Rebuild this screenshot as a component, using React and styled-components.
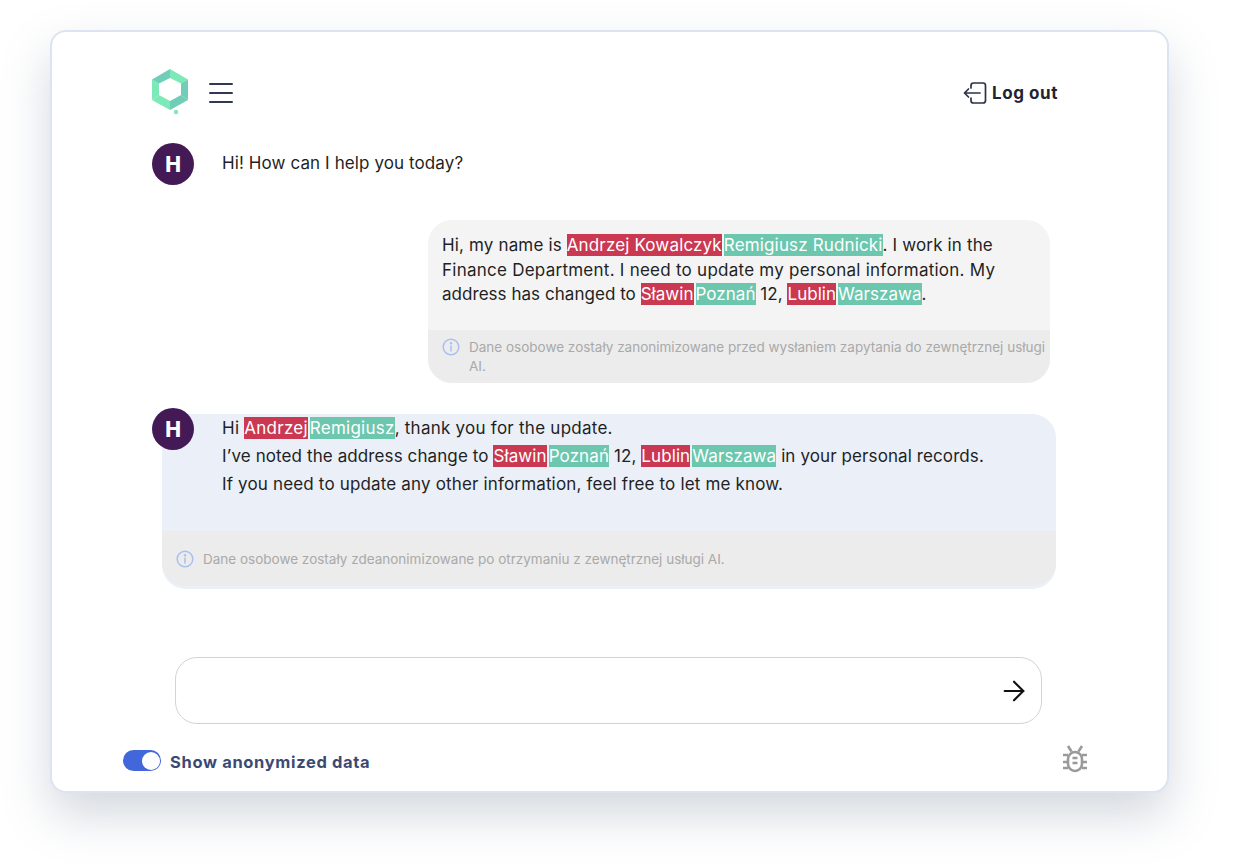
import styled, { createGlobalStyle } from "styled-components";
import { ArrowRight } from "lucide-react";

const GlobalStyle = createGlobalStyle`
  html, body {
    margin: 0;
    padding: 0;
    background: #fff;
    overflow: hidden;
  }
  body {
    font-family: Inter, "Noto Sans", sans-serif;
    color: #1f1f24;
  }
`;

const Page = styled.div`
  width: 1242px;
  height: 864px;
  padding: 30px 0 0 50px;
  box-sizing: border-box;
`;

const Card = styled.main`
  width: 1119px;
  height: 763px;
  box-sizing: border-box;
  border: 2px solid #dbe4f0;
  border-radius: 16px;
  background: #fff;
  box-shadow: 0 22px 48px rgba(110, 125, 145, 0.3);
  padding: 37px 0 0;
  display: flex;
  flex-direction: column;
`;

const Header = styled.header`
  height: 49px;
  display: flex;
  align-items: flex-start;
  justify-content: space-between;
  padding: 0 109px 0 100px;
`;

const HeaderLeft = styled.div`
  display: flex;
  align-items: flex-start;
  gap: 19px;
`;

const Burger = styled.button`
  width: 24px;
  height: 20px;
  margin-top: 14px;
  padding: 0;
  border: 0;
  background: none;
  display: flex;
  flex-direction: column;
  justify-content: space-between;

  & span {
    height: 2px;
    background: #2f3a52;
    border-radius: 1px;
  }
`;

const LogoutButton = styled.button`
  display: flex;
  align-items: center;
  gap: 5px;
  margin-top: 12px;
  padding: 0;
  border: 0;
  background: none;
  font: 700 17px Inter, sans-serif;
  letter-spacing: 0.55px;
  color: #1f2433;
`;

const Avatar = styled.div`
  width: 42px;
  height: 42px;
  border-radius: 50%;
  background: #431a56;
  color: #fff;
  font-weight: 800;
  font-size: 21px;
  display: flex;
  align-items: center;
  justify-content: center;
  flex: none;
`;

const Greeting = styled.section`
  display: flex;
  gap: 28px;
  margin: 25px 0 0 100px;
  height: 42px;
`;

const MessageText = styled.p`
  margin: 0;
  font-size: 17px;
  line-height: 40px;
  letter-spacing: 0.1px;
`;

const UserBubble = styled.section`
  width: 622px;
  height: 163px;
  margin: 35px 0 0 376px;
  border-radius: 24px;
  background: #f4f4f4;
  overflow: hidden;
  display: flex;
  flex-direction: column;
`;

const UserText = styled.div`
  padding: 13px 14px 0;
  height: 110px;
  box-sizing: border-box;
  font-size: 17px;
  line-height: 24.5px;
  white-space: nowrap;
`;

const Line = styled.div`
  letter-spacing: ${(props) => props.$tracking};
`;

const Anon = styled.span`
  background: ${(props) => (props.$after ? "#6cc7ae" : "#ca3852")};
  color: #fff;
  margin-right: ${(props) => (props.$after ? "0" : "2px")};
  padding: 1px 0;
`;

const Notice = styled.div`
  display: flex;
  gap: 9px;
  background: #ececec;
  padding: ${(props) => (props.$wide ? "19px 14px 0" : "8px 0 0 14px")};
  height: ${(props) => (props.$wide ? "55px" : "53px")};
  box-sizing: border-box;
  font-size: 13.5px;
  line-height: 19px;
  color: #a9a9a9;
  white-space: nowrap;

  & svg {
    flex: none;
  }
`;

const BotBubble = styled.section`
  position: relative;
  width: 894px;
  height: 175px;
  margin: 31px 0 0 110px;
  border-radius: 24px;
  background: #eaeff8;
`;

const BotAvatar = styled.div`
  position: absolute;
  left: -10px;
  top: -6px;
`;

const BotBody = styled.div`
  height: 117px;
  box-sizing: border-box;
  padding-left: 60px;
  font-size: 17px;
  line-height: 28px;
  white-space: nowrap;
`;

const BotNotice = styled(Notice)`
  border-radius: 0 0 24px 24px;
`;

const Composer = styled.div`
  width: 867px;
  height: 67px;
  box-sizing: border-box;
  margin: 68px 0 0 123px;
  border: 1px solid #d0d3dc;
  border-radius: 22px;
  display: flex;
  align-items: center;
  justify-content: flex-end;
  padding-right: 11px;
  color: #111;
`;

const Footer = styled.footer`
  display: flex;
  align-items: center;
  justify-content: space-between;
  margin-top: 27px;
  padding: 0 79px 0 71px;

  & > svg {
    margin-top: -6px;
  }
`;

const ToggleRow = styled.label`
  display: flex;
  align-items: center;
  gap: 9px;
  font-size: 16.5px;
  font-weight: 700;
  letter-spacing: 0.65px;
  color: #3c4a73;
`;

const Toggle = styled.span`
  width: 38px;
  height: 21px;
  border-radius: 11px;
  background: #4167da;
  position: relative;
  margin-top: -3px;

  &::after {
    content: "";
    position: absolute;
    right: 1px;
    top: 1.5px;
    width: 18px;
    height: 18px;
    border-radius: 50%;
    background: #fff;
  }
`;

const InfoIcon = () => (
  <svg width="18" height="18" viewBox="0 0 18 18" fill="none" stroke="#a9bff0" strokeWidth="1.5">
    <circle cx="9" cy="9" r="7.8" />
    <path d="M9 8v5" strokeLinecap="round" />
    <circle cx="9" cy="5.3" r="0.5" fill="#a9bff0" />
  </svg>
);

const Logo = () => (
  <svg width="38" height="46" viewBox="0 0 38 46">
    <path d="M18 0 L36 10.500 L29 14.500 L18 9Z" fill="#7de8b8" />
    <path d="M36 10.500 V31 L29 26 V14.500Z" fill="#70cdb8" />
    <path d="M36 31 L18 41 V32 L29 26Z" fill="#70cdb8" />
    <path d="M18 41 L0 31 L7 26 L18 32Z" fill="#7de8b8" />
    <path d="M0 31 V10.500 L7 14.500 V26Z" fill="#7de8b8" />
    <path d="M0 10.500 L18 0 V9 L7 14.500Z" fill="#70cdb8" />
    <circle cx="24" cy="43" r="2.200" fill="#7de8b8" />
  </svg>
);

const LogoutIcon = () => (
  <svg width="24" height="24" viewBox="0 0 24 24" fill="none" stroke="#2b3245" strokeWidth="1.7" strokeLinecap="round" strokeLinejoin="round">
    <path d="M8 7V4.500A2.500 2.500 0 0 1 10.500 2H20a2.500 2.500 0 0 1 2.500 2.500v15A2.500 2.500 0 0 1 20 22h-9.500A2.500 2.500 0 0 1 8 19.500V17" />
    <path d="M17 12H1.500M5.500 8l-4 4 4 4" />
  </svg>
);

const BugIcon = () => (
  <svg width="26" height="28" viewBox="0 0 26 28" fill="none" stroke="#9a9a9a" strokeWidth="2.600">
    <rect x="6" y="7" width="14" height="19" rx="7" />
    <path d="M1 10h5M20 10h5M1 17h5M20 17h5M1 23h5M20 23h5M6 1l3.500 5.500M20 1l-3.500 5.500" />
    <path d="M10.500 13h5M10.500 18h5" />
  </svg>
);

const App = () => (
  <Page>
    <GlobalStyle />
    <Card>
      <Header>
        <HeaderLeft>
          <Logo />
          <Burger>
            <span />
            <span />
            <span />
          </Burger>
        </HeaderLeft>
        <LogoutButton>
          <LogoutIcon />
          Log out
        </LogoutButton>
      </Header>

      <Greeting>
        <Avatar>H</Avatar>
        <MessageText>Hi! How can I help you today?</MessageText>
      </Greeting>

      <UserBubble>
        <UserText>
          <Line $tracking="0.15px">
            Hi, my name is <Anon>Andrzej Kowalczyk</Anon>
            <Anon $after>Remigiusz Rudnicki</Anon>. I work in the
          </Line>
          <Line $tracking="0.25px">Finance Department. I need to update my personal information. My</Line>
          <Line $tracking="0.04px">
            address has changed to <Anon>Sławin</Anon>
            <Anon $after>Poznań</Anon> 12, <Anon>Lublin</Anon>
            <Anon $after>Warszawa</Anon>.
          </Line>
        </UserText>
        <Notice>
          <InfoIcon />
          <span>
            Dane osobowe zostały zanonimizowane przed wysłaniem zapytania do zewnętrznej usługi
            <br />
            AI.
          </span>
        </Notice>
      </UserBubble>

      <BotBubble>
        <BotAvatar>
          <Avatar>H</Avatar>
        </BotAvatar>
        <BotBody>
          <Line $tracking="0.25px">
            Hi <Anon>Andrzej</Anon>
            <Anon $after>Remigiusz</Anon>, thank you for the update.
          </Line>
          <Line $tracking="0.1px">
            I’ve noted the address change to <Anon>Sławin</Anon>
            <Anon $after>Poznań</Anon> 12, <Anon>Lublin</Anon>
            <Anon $after>Warszawa</Anon> in your personal records.
          </Line>
          <Line $tracking="0.16px">If you need to update any other information, feel free to let me know.</Line>
        </BotBody>
        <BotNotice $wide>
          <InfoIcon />
          <span>Dane osobowe zostały zdeanonimizowane po otrzymaniu z zewnętrznej usługi AI.</span>
        </BotNotice>
      </BotBubble>

      <Composer>
        <ArrowRight size={32} strokeWidth={1.6} />
      </Composer>

      <Footer>
        <ToggleRow>
          <Toggle />
          Show anonymized data
        </ToggleRow>
        <BugIcon />
      </Footer>
    </Card>
  </Page>
);

export default App;
